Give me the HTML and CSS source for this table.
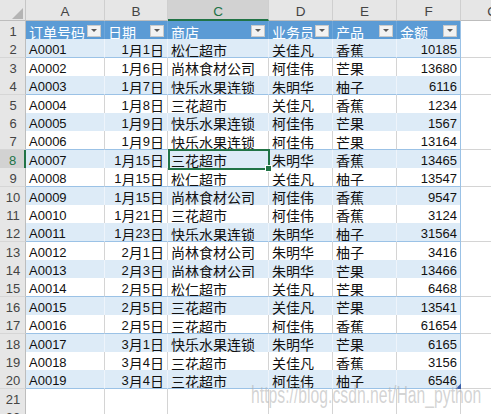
FILE: index.html
```html
<!DOCTYPE html>
<html lang="zh">
<head>
<meta charset="utf-8">
<title>Sheet</title>
<link rel="stylesheet" href="styles.css">
</head>
<body>
<div class="sheet">
  <div class="row colhead">
    <div class="corner"><span class="tri"></span></div>
    <div class="ch">A</div><div class="ch">B</div><div class="ch csel">C</div><div class="ch">D</div><div class="ch">E</div><div class="ch">F</div><div class="ch">G</div>
  </div>
  <div class="row thead">
    <div class="rh">1</div>
    <div class="c th">订单号码<span class="fb"></span></div>
    <div class="c th">日期<span class="fb"></span></div>
    <div class="c th">商店<span class="fb"></span></div>
    <div class="c th">业务员<span class="fb"></span></div>
    <div class="c th">产品<span class="fb"></span></div>
    <div class="c th f">金额<span class="fb"></span></div>
    <div class="c o"></div>
  </div>
  <div class="row b"><div class="rh">2</div><div class="c n">A0001</div><div class="c n r">1<i>月</i>1<i>日</i></div><div class="c">松仁超市</div><div class="c">关佳凡</div><div class="c">香蕉</div><div class="c n r f">10185</div><div class="c o"></div></div>
  <div class="row"><div class="rh">3</div><div class="c n">A0002</div><div class="c n r">1<i>月</i>6<i>日</i></div><div class="c">尚林食材公司</div><div class="c">柯佳伟</div><div class="c">芒果</div><div class="c n r f">13680</div><div class="c o"></div></div>
  <div class="row b"><div class="rh">4</div><div class="c n">A0003</div><div class="c n r">1<i>月</i>7<i>日</i></div><div class="c">快乐水果连锁</div><div class="c">朱明华</div><div class="c">柚子</div><div class="c n r f">6116</div><div class="c o"></div></div>
  <div class="row"><div class="rh">5</div><div class="c n">A0004</div><div class="c n r">1<i>月</i>8<i>日</i></div><div class="c">三花超市</div><div class="c">关佳凡</div><div class="c">香蕉</div><div class="c n r f">1234</div><div class="c o"></div></div>
  <div class="row b"><div class="rh">6</div><div class="c n">A0005</div><div class="c n r">1<i>月</i>9<i>日</i></div><div class="c">快乐水果连锁</div><div class="c">柯佳伟</div><div class="c">芒果</div><div class="c n r f">1567</div><div class="c o"></div></div>
  <div class="row"><div class="rh">7</div><div class="c n">A0006</div><div class="c n r">1<i>月</i>9<i>日</i></div><div class="c">快乐水果连锁</div><div class="c">柯佳伟</div><div class="c">芒果</div><div class="c n r f">13164</div><div class="c o"></div></div>
  <div class="row b"><div class="rh rsel">8</div><div class="c n">A0007</div><div class="c n r">1<i>月</i>15<i>日</i></div><div class="c active">三花超市</div><div class="c">朱明华</div><div class="c">香蕉</div><div class="c n r f">13465</div><div class="c o"></div></div>
  <div class="row"><div class="rh">9</div><div class="c n">A0008</div><div class="c n r">1<i>月</i>15<i>日</i></div><div class="c">松仁超市</div><div class="c">关佳凡</div><div class="c">柚子</div><div class="c n r f">13547</div><div class="c o"></div></div>
  <div class="row b"><div class="rh">10</div><div class="c n">A0009</div><div class="c n r">1<i>月</i>15<i>日</i></div><div class="c">尚林食材公司</div><div class="c">柯佳伟</div><div class="c">香蕉</div><div class="c n r f">9547</div><div class="c o"></div></div>
  <div class="row"><div class="rh">11</div><div class="c n">A0010</div><div class="c n r">1<i>月</i>21<i>日</i></div><div class="c">三花超市</div><div class="c">柯佳伟</div><div class="c">香蕉</div><div class="c n r f">3124</div><div class="c o"></div></div>
  <div class="row b"><div class="rh">12</div><div class="c n">A0011</div><div class="c n r">1<i>月</i>23<i>日</i></div><div class="c">快乐水果连锁</div><div class="c">朱明华</div><div class="c">柚子</div><div class="c n r f">31564</div><div class="c o"></div></div>
  <div class="row"><div class="rh">13</div><div class="c n">A0012</div><div class="c n r">2<i>月</i>1<i>日</i></div><div class="c">尚林食材公司</div><div class="c">朱明华</div><div class="c">柚子</div><div class="c n r f">3416</div><div class="c o"></div></div>
  <div class="row b"><div class="rh">14</div><div class="c n">A0013</div><div class="c n r">2<i>月</i>3<i>日</i></div><div class="c">尚林食材公司</div><div class="c">朱明华</div><div class="c">芒果</div><div class="c n r f">13466</div><div class="c o"></div></div>
  <div class="row"><div class="rh">15</div><div class="c n">A0014</div><div class="c n r">2<i>月</i>5<i>日</i></div><div class="c">松仁超市</div><div class="c">关佳凡</div><div class="c">芒果</div><div class="c n r f">6468</div><div class="c o"></div></div>
  <div class="row b"><div class="rh">16</div><div class="c n">A0015</div><div class="c n r">2<i>月</i>5<i>日</i></div><div class="c">三花超市</div><div class="c">关佳凡</div><div class="c">芒果</div><div class="c n r f">13541</div><div class="c o"></div></div>
  <div class="row"><div class="rh">17</div><div class="c n">A0016</div><div class="c n r">2<i>月</i>5<i>日</i></div><div class="c">三花超市</div><div class="c">柯佳伟</div><div class="c">香蕉</div><div class="c n r f">61654</div><div class="c o"></div></div>
  <div class="row b"><div class="rh">18</div><div class="c n">A0017</div><div class="c n r">3<i>月</i>1<i>日</i></div><div class="c">快乐水果连锁</div><div class="c">朱明华</div><div class="c">芒果</div><div class="c n r f">6165</div><div class="c o"></div></div>
  <div class="row"><div class="rh">19</div><div class="c n">A0018</div><div class="c n r">3<i>月</i>4<i>日</i></div><div class="c">三花超市</div><div class="c">关佳凡</div><div class="c">香蕉</div><div class="c n r f">3156</div><div class="c o"></div></div>
  <div class="row b"><div class="rh">20</div><div class="c n">A0019</div><div class="c n r">3<i>月</i>4<i>日</i></div><div class="c">三花超市</div><div class="c">柯佳伟</div><div class="c">柚子</div><div class="c n r f last">6546</div><div class="c o"></div></div>
  <div class="row"><div class="rh">21</div><div class="c o"></div><div class="c o"></div><div class="c o"></div><div class="c o"></div><div class="c o"></div><div class="c o"></div><div class="c o"></div></div>
  <div class="row"><div class="rh">22</div><div class="c o"></div><div class="c o"></div><div class="c o"></div><div class="c o"></div><div class="c o"></div><div class="c o"></div><div class="c o"></div></div>
</div>
<div class="wm">https://blog.csdn.net/Han_python</div>
</body>
</html>
```
FILE: styles.css
```css
html, body {
  margin: 0;
  padding: 0;
  background: #ffffff;
  overflow: hidden;
}
body {
  font-family: "Noto Sans CJK SC", sans-serif;
  position: relative;
  width: 491px;
  height: 414px;
}
.sheet {
  width: 491px;
  overflow: hidden;
}
.row {
  display: grid;
  grid-template-columns: 26px 79px 63px 101px 64px 64px 64px 64px;
  height: 18.4px;
}
.row > div {
  box-sizing: border-box;
  min-width: 0;
}
.colhead {
  height: 21px;
}
.corner {
  background: #e6e6e6;
  border-right: 1px solid #c6c6c6;
  border-bottom: 1px solid #bdbdbd;
  display: flex;
  align-items: flex-end;
  justify-content: flex-end;
}
.tri {
  width: 11px;
  height: 11px;
  margin: 0 2px 1px 0;
  background: #b4b4b4;
  clip-path: polygon(100% 0, 100% 100%, 0 100%);
}
.ch {
  background: #e6e6e6;
  border-right: 1px solid #cfcfcf;
  border-bottom: 1px solid #bdbdbd;
  color: #444444;
  font-family: "Liberation Sans", sans-serif;
  font-size: 13.5px;
  display: flex;
  align-items: center;
  justify-content: center;
  padding-top: 3px;
}
.ch.csel {
  background: #d2d2d2;
  color: #217346;
  border-bottom: 2px solid #217346;
}
.rh {
  background: #e6e6e6;
  border-right: 1px solid #bdbdbd;
  border-bottom: 1px solid #d6d6d6;
  color: #444444;
  font-family: "Liberation Sans", sans-serif;
  font-size: 13px;
  display: flex;
  align-items: center;
  justify-content: center;
  padding-top: 3px;
  padding-left: 1px;
}
.rh.rsel {
  background: #d2d2d2;
  color: #217346;
  border-right: 2px solid #217346;
}
.c {
  border-right: 1px solid #d4d4d4;
  border-bottom: 1px solid #9bc2e6;
  padding: 3px 3px 0 3px;
  display: flex;
  align-items: center;
  white-space: nowrap;
  overflow: hidden;
  font-size: 14px;
  line-height: 1;
  color: #111111;
  background: #ffffff;
}
.b .c {
  background: #ddebf7;
  border-right-color: #eef4fb;
}
.n {
  font-family: "Liberation Sans", sans-serif;
  font-size: 13px;
}
.n i {
  font-style: normal;
  font-family: "Noto Sans CJK SC", sans-serif;
  font-size: 14px;
}
.r {
  justify-content: flex-end;
}
.row .f {
  border-right-color: #9bc2e6;
}
.row .o {
  background: #ffffff;
  border-right-color: #d4d4d4;
  border-bottom-color: #d4d4d4;
}
.thead .c.th {
  background: #5b9bd5;
  color: #ffffff;
  border-right-color: #6fa7da;
  border-bottom-color: #9bc2e6;
  justify-content: space-between;
  padding-right: 3px;
}
.thead .c.th.f {
  border-right-color: #9bc2e6;
}
.fb {
  flex: none;
  width: 14px;
  height: 12px;
  box-sizing: border-box;
  background: #f2f2f2;
  border: 1px solid #c9c9c9;
  margin-top: -2px;
  display: flex;
  align-items: center;
  justify-content: center;
}
.fb::after {
  content: "";
  width: 0;
  height: 0;
  border-left: 3px solid transparent;
  border-right: 3px solid transparent;
  border-top: 3px solid #595959;
}
.active {
  position: relative;
  overflow: visible !important;
}
.active::after {
  content: "";
  position: absolute;
  top: -1px;
  left: 0;
  right: -2px;
  bottom: -2px;
  border: 2px solid #217346;
}
.active::before {
  content: "";
  position: absolute;
  right: -4px;
  bottom: -4px;
  width: 5px;
  height: 5px;
  background: #217346;
  border: 1px solid #ffffff;
  z-index: 2;
}
.last {
  position: relative;
  overflow: visible !important;
}
.last::after {
  content: "";
  position: absolute;
  right: -1px;
  bottom: -1px;
  width: 6px;
  height: 6px;
  background: #3a5fa8;
  clip-path: polygon(100% 0, 100% 100%, 0 100%);
}
.wm {
  position: absolute;
  left: 251px;
  top: 384px;
  font-family: "Liberation Sans", sans-serif;
  font-size: 23px;
  line-height: 23px;
  white-space: nowrap;
  color: rgba(175, 175, 175, 0.55);
  transform: scaleX(0.685);
  transform-origin: 0 0;
}
```
